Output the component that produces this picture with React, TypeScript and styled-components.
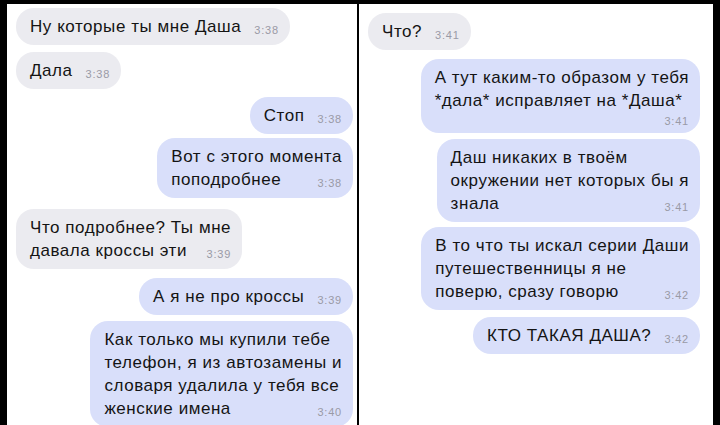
import styled, { createGlobalStyle } from "styled-components";

type Msg = {
  lines: string[];
  time: string;
  out?: boolean;
  gap: number;
  timeBelow?: boolean;
};

const left: Msg[] = [
  { lines: ["Ну которые ты мне Даша"], time: "3:38", gap: 0 },
  { lines: ["Дала"], time: "3:38", gap: 7 },
  { lines: ["Стоп"], time: "3:38", out: true, gap: 8 },
  { lines: ["Вот с этого момента", "поподробнее"], time: "3:38", out: true, gap: 4 },
  { lines: ["Что подробнее? Ты мне", "давала кроссы эти"], time: "3:39", gap: 11 },
  { lines: ["А я не про кроссы"], time: "3:39", out: true, gap: 9 },
  {
    lines: [
      "Как только мы купили тебе",
      "телефон, я из автозамены и",
      "словаря удалила у тебя все",
      "женские имена",
    ],
    time: "3:40",
    out: true,
    gap: 6,
  },
];

const right: Msg[] = [
  { lines: ["Что?"], time: "3:41", gap: 0 },
  {
    lines: ["А тут каким-то образом у тебя", "*дала* исправляет на *Даша*"],
    time: "3:41",
    out: true,
    gap: 9,
    timeBelow: true,
  },
  {
    lines: ["Даш никаких в твоём", "окружении нет которых бы я", "знала"],
    time: "3:41",
    out: true,
    gap: 6,
  },
  {
    lines: ["В то что ты искал серии Даши", "путешественницы я не", "поверю, сразу говорю"],
    time: "3:42",
    out: true,
    gap: 5,
  },
  { lines: ["КТО ТАКАЯ ДАША?"], time: "3:42", out: true, gap: 7 },
];

const GlobalStyle = createGlobalStyle`
  html, body {
    margin: 0;
    padding: 0;
    background: #000;
  }
  body {
    font-family: "Liberation Sans", Arial, sans-serif;
  }
`;

const Screen = styled.div`
  display: flex;
  gap: 2px;
  width: 720px;
  height: 425px;
  padding: 4px 7px 0;
  box-sizing: border-box;
  overflow: hidden;
  background: #000;
`;

const Panel = styled.div<{ $pad: string }>`
  display: flex;
  flex-direction: column;
  align-items: flex-start;
  background: #fff;
  padding: ${(p) => p.$pad};
  box-sizing: border-box;
  overflow: hidden;
`;

const LeftPanel = styled(Panel)`
  width: 350px;
`;

const RightPanel = styled(Panel)`
  width: 354px;
`;

const Bubble = styled.div<{ $out?: boolean; $gap: number }>`
  display: flex;
  flex-direction: column;
  flex-shrink: 0;
  align-self: ${(p) => (p.$out ? "flex-end" : "flex-start")};
  margin-top: ${(p) => p.$gap}px;
  padding: 7px 11px 7px 14px;
  border-radius: 18px;
  background: ${(p) => (p.$out ? "#d9dffa" : "#ebebf0")};
  color: #141414;
  font-size: 17px;
  letter-spacing: 0.55px;
  line-height: 23px;
  white-space: nowrap;
`;

const LastLine = styled.div`
  display: flex;
  align-items: baseline;
  justify-content: space-between;
  gap: 13px;
`;

const Time = styled.span`
  position: relative;
  top: 2px;
  font-size: 11px;
  line-height: 14px;
  letter-spacing: 0.8px;
  color: #9a9aa6;
`;

const TimeRow = styled.div`
  text-align: right;
  line-height: 14px;
  margin-top: -1px;
`;

const Message = ({ m }: { m: Msg }) => {
  const head = m.lines.slice(0, -1);
  const last = m.lines[m.lines.length - 1];
  return (
    <Bubble $out={m.out} $gap={m.gap}>
      {head.map((l, i) => (
        <div key={i}>{l}</div>
      ))}
      {m.timeBelow ? (
        <>
          <div>{last}</div>
          <TimeRow>
            <Time>{m.time}</Time>
          </TimeRow>
        </>
      ) : (
        <LastLine>
          <span>{last}</span>
          <Time>{m.time}</Time>
        </LastLine>
      )}
    </Bubble>
  );
};

export default function App() {
  return (
    <>
      <GlobalStyle />
      <Screen>
        <LeftPanel $pad="4px 4px 0 9px">
          {left.map((m, i) => (
            <Message key={i} m={m} />
          ))}
        </LeftPanel>
        <RightPanel $pad="9px 13px 0 9px">
          {right.map((m, i) => (
            <Message key={i} m={m} />
          ))}
        </RightPanel>
      </Screen>
    </>
  );
}
